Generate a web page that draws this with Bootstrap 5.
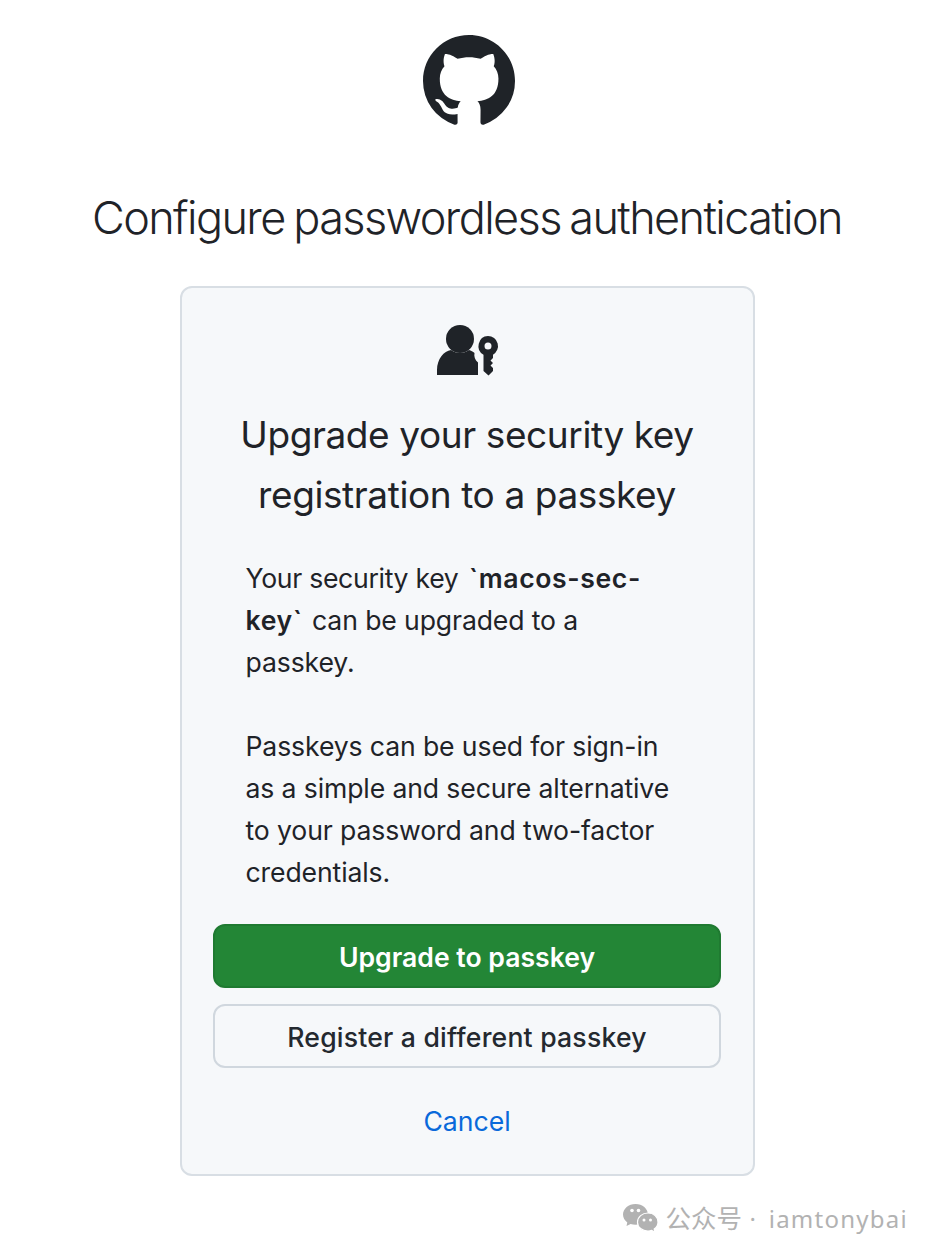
<!doctype html>
<html lang="en">
<head>
<meta charset="utf-8">
<title>Configure passwordless authentication</title>
<link href="https://cdn.jsdelivr.net/npm/bootstrap@5.3.0/dist/css/bootstrap.min.css" rel="stylesheet">
<style>
html,body{height:100%;}
body{margin:0;background:#fff;color:#1f2328;font-family:Inter,"Noto Sans",sans-serif;overflow:hidden;}
.page-wrap{width:934px;height:1256px;padding-top:35px;}
.gh-logo{width:92px;height:92px;display:block;fill:#1f2328;margin-left:4px;}
.page-title{font-size:45px;font-weight:300;letter-spacing:-1.6px;word-spacing:-2.5px;line-height:60px;margin:61px 0 38px;color:#1f2328;white-space:nowrap;}
.auth-box{width:575px;height:890px;background:#f6f8fa;border:2px solid #d8dee4;border-radius:12px;padding:36px 32px 0;}
.key-icon{width:64px;height:54px;display:block;fill:#1f2328;margin-left:1px;}
.box-heading{font-size:37px;font-weight:400;line-height:60px;margin:27px 0 32px;letter-spacing:-.4px;}
.box-copy{font-size:26.6px;line-height:42px;letter-spacing:-.12px;margin:0;padding:0 31px 0 32px;width:507px;}
.box-copy p{margin:0 0 42px;}
.box-copy p:last-child{margin-bottom:0;}
.copy-lead{letter-spacing:-.3px;}
.box-copy strong{font-weight:600;letter-spacing:.6px;}
.strong-a{margin-left:3px;}
.strong-b{margin-right:2px;}
.act-btn{height:64px;font-size:26.6px;font-weight:500;border-radius:12px;border-width:2px;display:flex;align-items:center;justify-content:center;width:508px;padding:4px 0 0;flex:none;}
.act-primary{background:#238636;border-color:#1f7a31;color:#fff;margin-top:31px;font-weight:600;}
.act-secondary{background:#f6f8fa;border-color:#d0d7de;color:#24292f;margin-top:16px;letter-spacing:.2px;}
.cancel-link{font-size:26.6px;color:#0969da;text-decoration:none;margin-top:33px;line-height:40px;}
.mark-line{width:880px;margin-top:26px;margin-left:2px;color:#b2b2b2;font-size:25.5px;line-height:30px;font-family:"Noto Sans CJK SC","Noto Sans",sans-serif;}
.mark-latin{letter-spacing:1.25px;font-size:24px;font-family:"Noto Sans",sans-serif;}
.mark-dot{padding:0 4px 0 0;}
.wx-icon{width:35px;height:29px;display:block;fill:#b2b2b2;}
</style>
</head>
<body>
<div class="page-wrap d-flex flex-column align-items-center">
  <svg class="gh-logo" viewBox="0 0 16 16" aria-hidden="true"><path d="M8 0c4.42 0 8 3.58 8 8a8.013 8.013 0 0 1-5.45 7.59c-.4.08-.55-.17-.55-.38 0-.27.01-1.13.01-2.2 0-.75-.25-1.23-.54-1.48 1.78-.2 3.65-.88 3.65-3.95 0-.88-.31-1.59-.82-2.15.08-.2.36-1.02-.08-2.12 0 0-.67-.22-2.2.82-.64-.18-1.32-.27-2-.27-.68 0-1.36.09-2 .27-1.53-1.03-2.2-.82-2.2-.82-.44 1.1-.16 1.92-.08 2.12-.51.56-.82 1.28-.82 2.15 0 3.06 1.86 3.75 3.64 3.95-.23.2-.44.55-.51 1.07-.46.21-1.61.55-2.33-.66-.15-.24-.6-.83-1.23-.82-.67.01-.27.38.01.53.34.19.73.9.82 1.13.16.45.68 1.31 2.69.94 0 .67.01 1.3.01 1.49 0 .21-.15.45-.55.38A7.995 7.995 0 0 1 0 8c0-4.42 3.58-8 8-8Z"/></svg>
  <h1 class="page-title text-center">Configure passwordless authentication</h1>
  <div class="auth-box d-flex flex-column align-items-center">
    <svg class="key-icon" viewBox="0 0 64 54" aria-hidden="true">
      <circle cx="24" cy="15" r="14"/>
      <path d="M1 51v-5C1 35 8 27 15 26c5 4 13 4 18 0 2 .6 4 1.500 5.500 3-.7 3 .4 7 3.500 9.500V51Z"/>
      <path fill-rule="evenodd" d="M52 12a10 10 0 0 1 5 18.660V34l-2.500 2.500 2.500 2.500-2.500 2.500 2.500 2.500v3l-4.500 4.500-5-4.500V30.660A10 10 0 0 1 52 12Zm0 6.500a3.500 3.500 0 1 0 0 7 3.500 3.500 0 0 0 0-7Z"/>
    </svg>
    <h2 class="box-heading text-center">Upgrade your security key<br>registration to a passkey</h2>
    <div class="box-copy">
      <p><span class="copy-lead">Your security key</span> <strong class="strong-a">`macos-sec-</strong><strong class="strong-b">key`</strong> can be upgraded to a <span class="d-block">passkey.</span></p>
      <p>Passkeys can be used for sign-in as a simple and secure alternative to your password and two-factor credentials.</p>
    </div>
    <button type="button" class="btn act-btn act-primary">Upgrade to passkey</button>
    <button type="button" class="btn act-btn act-secondary">Register a different passkey</button>
    <a href="#" class="cancel-link">Cancel</a>
  </div>
  <div class="mark-line d-flex justify-content-end align-items-center gap-2">
    <svg class="wx-icon" viewBox="0 0 35 29" aria-hidden="true">
      <path d="M12.500 0C5.600 0 0 4.700 0 10.500c0 3.200 1.700 6 4.300 8L3.500 22l4.100-2.100c1.500.5 3.200.8 4.900.8 6.900 0 12.500-4.500 12.500-10.200S19.400 0 12.500 0Z"/>
      <path stroke="#fff" stroke-width="1.200" d="M25 9c-5.700 0-10.500 3.900-10.500 9.200S19.300 27 25 27c1.300 0 2.500-.2 3.700-.6L32 28.300l-.8-3.300c2.300-1.600 3.800-4 3.800-6.800C35 12.900 30.700 9 25 9Z"/>
      <g fill="#fff">
        <circle cx="9" cy="6.500" r="1.800"/><circle cx="15.500" cy="6.500" r="1.800"/>
        <circle cx="21" cy="16" r="1.500"/><circle cx="27.500" cy="16" r="1.500"/>
      </g>
    </svg>
    <span>公众号<span class="mark-latin"><span class="mark-dot"> · </span>iamtonybai</span></span>
  </div>
</div>
<script src="https://cdn.jsdelivr.net/npm/bootstrap@5.3.0/dist/js/bootstrap.bundle.min.js"></script>
</body>
</html>
